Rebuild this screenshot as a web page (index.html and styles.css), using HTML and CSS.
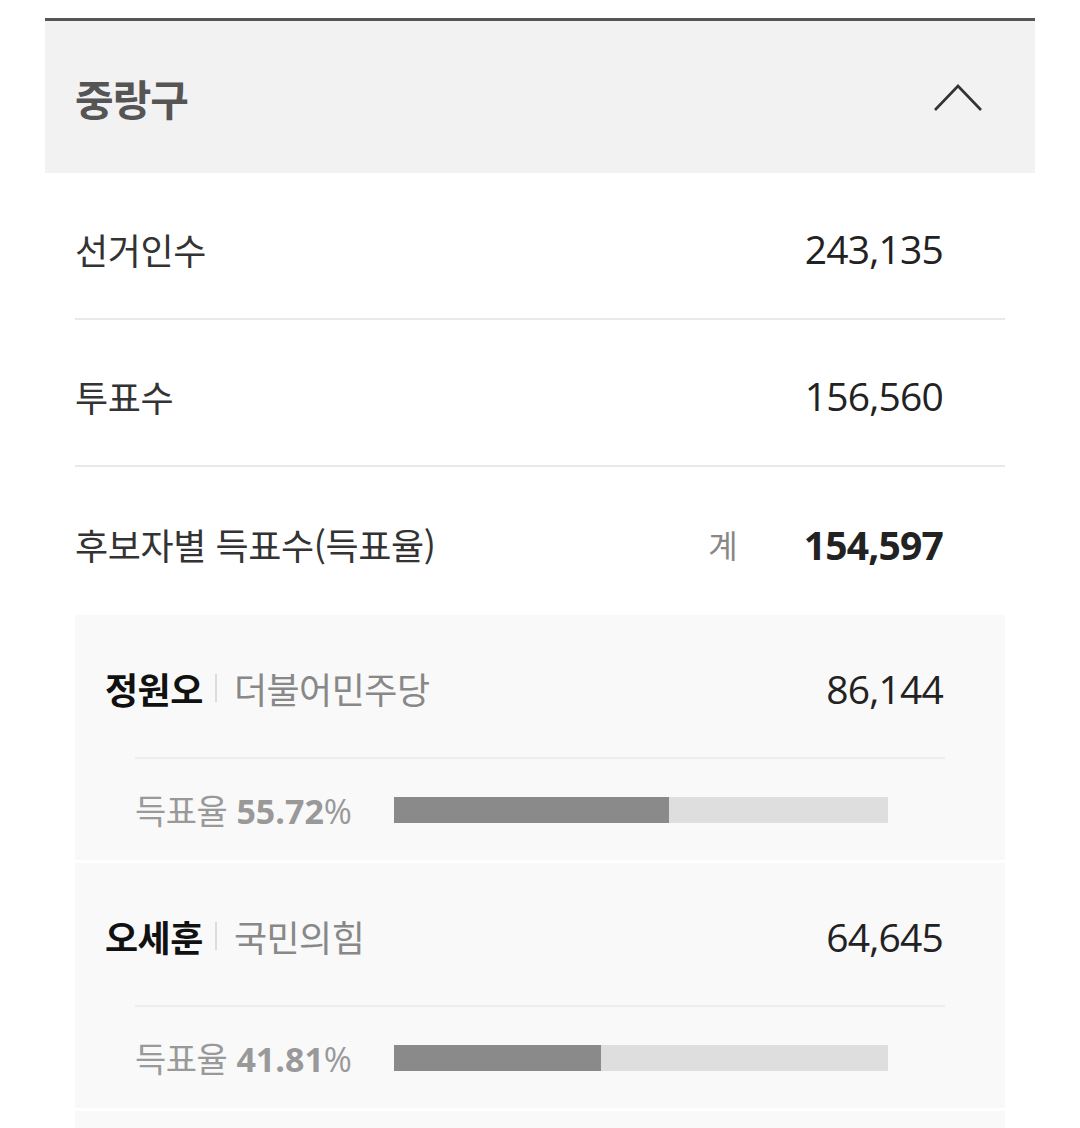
FILE: index.html
```html
<!DOCTYPE html>
<html lang="ko">
<head>
<meta charset="utf-8">
<link rel="stylesheet" href="styles.css">
</head>
<body>
<div class="panel">
  <div class="head">
    <h2 class="title">중랑구</h2>
    <svg class="chev" width="50" height="30" viewBox="0 0 50 30"><polyline points="2,27 25,3 48,27" fill="none" stroke="#333" stroke-width="2.6"/></svg>
  </div>
  <div class="body">
    <div class="row line"><span class="label">선거인수</span><span class="val">243,135</span></div>
    <div class="row line"><span class="label">투표수</span><span class="val">156,560</span></div>
    <div class="row last"><span class="label">후보자별 득표수(득표율)</span><span class="sum"><span class="gye">계</span><span class="val bold">154,597</span></span></div>

    <div class="cand">
      <div class="cand-top">
        <span class="who"><span class="name">정원오</span><span class="sep"></span><span class="party">더불어민주당</span></span>
        <span class="val">86,144</span>
      </div>
      <div class="cand-bot">
        <span class="rate">득표율 <b>55.72</b><span class="pct">%</span></span>
        <div class="bar"><div class="fill" style="width:55.72%"></div></div>
      </div>
    </div>
    <div class="cand">
      <div class="cand-top">
        <span class="who"><span class="name">오세훈</span><span class="sep"></span><span class="party">국민의힘</span></span>
        <span class="val">64,645</span>
      </div>
      <div class="cand-bot">
        <span class="rate">득표율 <b>41.81</b><span class="pct">%</span></span>
        <div class="bar"><div class="fill" style="width:41.81%"></div></div>
      </div>
    </div>
    <div class="cand"></div>
  </div>
</div>
</body>
</html>
```
FILE: styles.css
```css
html, body { margin: 0; padding: 0; background: #fff; }
body {
  font-family: "Noto Sans CJK KR", "Noto Sans", sans-serif;
  color: #222;
  height: 1128px;
  overflow: hidden;
}
.panel {
  margin: 18px 45px 0;
  border-top: 3px solid #555;
}
.head {
  background: #f2f2f2;
  height: 152px;
  display: flex;
  align-items: center;
  justify-content: space-between;
  padding: 0 52px 0 30px;
}
.title {
  margin: 0;
  font-size: 42px;
  font-weight: 700;
  color: #555;
  letter-spacing: -1px;
}
.chev { margin-top: 2px; }
.body { padding: 0 30px; }
.row {
  display: flex;
  align-items: center;
  justify-content: space-between;
  height: 145px;
  padding: 6px 62px 0 0;
  box-sizing: border-box;
  font-size: 36px;
}
.row.line { height: 147px; border-bottom: 2px solid #e9e9e9; }
.row.last { height: 148px; }
.label { color: #333; letter-spacing: -0.4px; }
.val { color: #222; font-size: 39px; letter-spacing: -0.8px; font-family: "Open Sans", "Noto Sans", sans-serif; }
.bold { font-weight: 700; }
.sum { display: flex; align-items: center; }
.gye { color: #888; font-size: 32px; margin-right: 66px; }
.cand {
  background: #f9f9f9;
  margin-bottom: 3px;
  height: 245px;
}
.cand-top {
  display: flex;
  align-items: center;
  justify-content: space-between;
  height: 142px;
  padding: 4px 62px 0 30px;
  box-sizing: border-box;
}
.who { display: flex; align-items: center; font-size: 36px; }
.name { font-weight: 700; color: #111; letter-spacing: -0.5px; }
.sep { width: 2px; height: 28px; background: #ddd; margin: 0 17px 0 12px; }
.party { color: #888; letter-spacing: -0.5px; }
.cand-bot {
  margin: 0 60px;
  border-top: 2px solid #ededed;
  height: 101px;
  display: flex;
  align-items: center;
}
.rate { color: #999; font-size: 34px; width: 259px; letter-spacing: -0.5px; white-space: nowrap; }
.rate b { font-weight: 700; font-family: "Open Sans", "Noto Sans", sans-serif; letter-spacing: 0; }
.pct { font-family: "Open Sans", "Noto Sans", sans-serif; font-weight: 400; }
.bar { width: 494px; height: 26px; background: #dedede; }
.fill { height: 100%; background: #8a8a8a; }
```
